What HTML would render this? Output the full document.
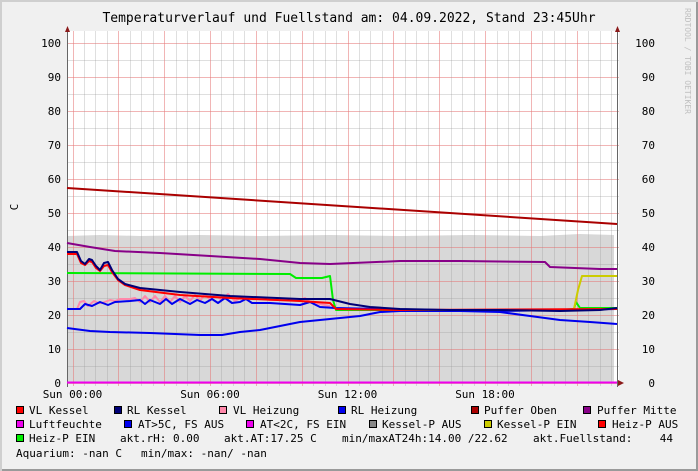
<!DOCTYPE html>
<html><head><meta charset="utf-8"><style>
html,body{margin:0;padding:0;background:#f0f0f0}
svg{display:block}
text{font-family:"DejaVu Sans Mono","Liberation Mono",monospace;fill:#000}
</style></head><body>
<svg width="698" height="471" viewBox="0 0 698 471" xmlns="http://www.w3.org/2000/svg">
<rect x="0" y="0" width="698" height="471" fill="#f0f0f0"/>
<rect x="0.5" y="0.5" width="696" height="469" fill="none" stroke="#cfcfcf" stroke-width="1"/>
<rect x="696" y="0" width="2" height="471" fill="#9a9a9a"/>
<rect x="0" y="469" width="698" height="2" fill="#9a9a9a"/>
<rect x="0" y="0" width="698" height="2" fill="#cfcfcf"/>
<rect x="0" y="0" width="2" height="471" fill="#cfcfcf"/>
<text x="349" y="22" font-size="13" text-anchor="middle">Temperaturverlauf und Fuellstand am: 04.09.2022, Stand 23:45Uhr</text>
<text transform="translate(685,8) rotate(90)" font-size="8" style="fill:#c0c0c0">RRDTOOL / TOBI OETIKER</text>
<text transform="translate(18,207) rotate(-90)" font-size="11" text-anchor="middle">C</text>
<!-- plot bg -->
<rect x="67" y="31" width="552" height="352" fill="#ffffff"/>
<!-- gray area -->
<path d="M67 383 L67 236 L100 235 L140 236 L200 235 L260 236 L330 235 L400 236 L470 235 L540 236 L580 234 L614 235 L614 383 Z" fill="#d8d8d8"/>
<g stroke="#d6b5b5" stroke-width="1" opacity="0.8" id="minor">
</g>
<g id="grid"></g>
<!-- axes -->
<line x1="67.5" y1="28" x2="67.5" y2="387" stroke="#666"/>
<line x1="617.5" y1="28" x2="617.5" y2="387" stroke="#666"/>
<polygon points="65,32 70,32 67.5,26" fill="#8b1a1a"/>
<polygon points="615,32 620,32 617.5,26" fill="#8b1a1a"/>
<polygon points="618,380 618,386 624,383" fill="#8b1a1a"/>
<g id="labels"></g>
<!-- data -->
<g fill="none" stroke-width="2" stroke-linejoin="round">
<polyline stroke="#aa0000" points="67,188 617,224"/>
<polyline stroke="#880088" points="67,243 90,247 115,251 160,253 210,256 260,259 300,263 330,264 400,261 460,261 545,262 550,267 600,269 617,269"/>
<polyline stroke="#0000ee" points="67,328 90,331 110,332 150,333 200,335 222,335 240,332 260,330 280,326 300,322 320,320 340,318 360,316 380,312 400,311 460,311 500,312 530,316 560,320 590,322 617,324"/>
<polyline stroke="#ff88aa" points="67,309 77,309 80,302 84,301 88,306 94,301 98,303 102,303 110,300 115,301 120,299 130,299 135,298 140,302 145,296 150,302 155,296 160,302 165,296 170,302 175,296 180,302 185,296 190,301 195,295 200,301 205,294 210,300 215,295 222,300 228,294 235,301 240,298 250,298 260,298 270,300 300,300 305,298 310,302 330,306"/>
<polyline stroke="#0000ee" points="67,309 80,309 85,304 92,306 100,302 108,305 115,302 130,301 140,300 145,304 150,300 160,304 166,299 172,304 180,299 190,304 197,300 205,303 212,299 218,303 225,298 232,303 240,302 246,299 252,303 270,303 300,305 310,302 320,307 335,308 380,309 440,310 500,311 560,310 617,309"/>
<polyline stroke="#00ee00" points="67,273 290,274 296,278 322,278 330,276 333,300 336,310 430,310 490,310 560,310 574,309 576,302 580,308 617,308"/>
<polyline stroke="#cccc00" points="574,309 578,290 582,276 617,276"/>
<polyline stroke="#ff0000" points="67,254 77,254 81,263 85,265 89,261 92,262 96,268 100,271 104,266 108,265 112,272 118,280 125,285 140,290 180,295 230,298 300,301 330,303 336,309 400,310 617,309"/>
<polyline stroke="#000077" points="67,252 77,252 81,261 85,264 89,259 92,260 96,266 100,270 104,263 108,262 112,270 118,279 125,284 140,288 180,292 230,296 300,299 330,299 350,304 370,307 400,309 450,310 500,310 560,311 600,310 617,308"/>
<line x1="67" y1="382.5" x2="617" y2="382.5" stroke="#ee00ee" stroke-width="2"/>
</g>
<!-- legend -->
<g font-size="11">
<g stroke="#000" stroke-width="1">
<rect x="16.5" y="406.5" width="7" height="7" fill="#ff0000"/>
<rect x="114.5" y="406.5" width="7" height="7" fill="#000077"/>
<rect x="219.5" y="406.5" width="7" height="7" fill="#ff88aa"/>
<rect x="338.5" y="406.5" width="7" height="7" fill="#0000ee"/>
<rect x="471.5" y="406.5" width="7" height="7" fill="#aa0000"/>
<rect x="583.5" y="406.5" width="7" height="7" fill="#880088"/>
<rect x="16.5" y="420.5" width="7" height="7" fill="#ee00ee"/>
<rect x="124.5" y="420.5" width="7" height="7" fill="#0000ee"/>
<rect x="246.5" y="420.5" width="7" height="7" fill="#ee00ee"/>
<rect x="369.5" y="420.5" width="7" height="7" fill="#888888"/>
<rect x="484.5" y="420.5" width="7" height="7" fill="#cccc00"/>
<rect x="598.5" y="420.5" width="7" height="7" fill="#ff0000"/>
<rect x="16.5" y="434.5" width="7" height="7" fill="#00ee00"/>
</g>
<text x="29" y="414">VL Kessel</text>
<text x="127" y="414">RL Kessel</text>
<text x="233" y="414">VL Heizung</text>
<text x="351" y="414">RL Heizung</text>
<text x="484" y="414">Puffer Oben</text>
<text x="597" y="414">Puffer Mitte</text>
<text x="29" y="428">Luftfeuchte</text>
<text x="138" y="428">AT&gt;5C, FS AUS</text>
<text x="260" y="428">AT&lt;2C, FS EIN</text>
<text x="382" y="428">Kessel-P AUS</text>
<text x="497" y="428">Kessel-P EIN</text>
<text x="612" y="428">Heiz-P AUS</text>
<text x="29" y="442">Heiz-P EIN</text>
<text x="120" y="442">akt.rH: 0.00</text>
<text x="224" y="442">akt.AT:17.25 C</text>
<text x="342" y="442">min/maxAT24h:14.00 /22.62</text>
<text x="533" y="442">akt.Fuellstand:</text>
<text x="673" y="442" text-anchor="end">44</text>
<text x="16" y="457">Aquarium: -nan C</text>
<text x="141" y="457">min/max: -nan/ -nan</text>
</g>
<script>
var ns="http://www.w3.org/2000/svg",g=document.getElementById("grid"),lb=document.getElementById("labels");
function L(x1,y1,x2,y2,c){var l=document.createElementNS(ns,"line");l.setAttribute("x1",x1);l.setAttribute("y1",y1);l.setAttribute("x2",x2);l.setAttribute("y2",y2);l.setAttribute("stroke",c);g.appendChild(l);}
function T(x,y,s,a){var t=document.createElementNS(ns,"text");t.setAttribute("x",x);t.setAttribute("y",y);t.setAttribute("font-size","11");t.setAttribute("text-anchor",a);t.textContent=s;lb.appendChild(t);}
for(var i=0;i<=20;i++){var y=383-i*17+0.5;L(67,y,619,y,i%2==0?"rgba(230,120,120,0.55)":"rgba(150,150,150,0.3)");}
for(var k=-1;k<=48;k++){var x=72.5+k*11.46;if(x<67||x>619)continue;x=Math.round(x)+0.5;L(x,31,x,386,k%4==0?"rgba(230,120,120,0.55)":"rgba(150,150,150,0.3)");}
for(var v=0;v<=100;v+=10){var y=383-v*3.4+4;T(61,y,""+v,"end");T(655,y,""+v,"end");}
var xs=["Sun 00:00","Sun 06:00","Sun 12:00","Sun 18:00"];
for(var j=0;j<4;j++)T(72.5+j*137.5,398,xs[j],"middle");
</script>
</svg>
</body></html>
